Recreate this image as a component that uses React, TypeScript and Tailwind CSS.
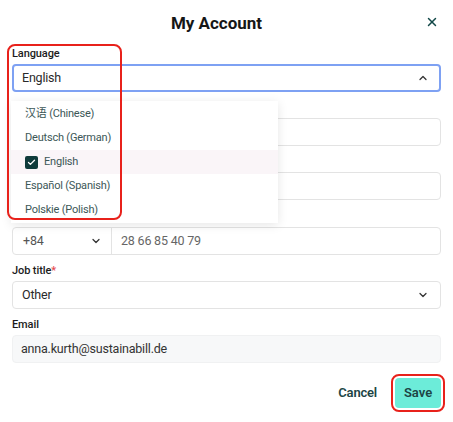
import { X, ChevronUp, ChevronDown, Check } from 'lucide-react';

const languages = [
  { label: '汉语 (Chinese)' },
  { label: 'Deutsch (German)' },
  { label: 'English', selected: true },
  { label: 'Español (Spanish)' },
  { label: 'Polskie (Polish)' },
];

function Label({ children, required }: { children?: React.ReactNode; required?: boolean }) {
  return (
    <div className="h-4 mb-[2px] text-[11px] leading-4 font-medium tracking-[-0.1px] text-[#1c1c1c]">
      {children}
      {required && <span className="text-[#e5484d]">*</span>}
    </div>
  );
}

export default function App() {
  return (
    <div
      className="w-[453px] h-[422px] bg-white px-3 relative"
      style={{ fontFamily: 'Roboto, "Noto Sans CJK SC", sans-serif' }}
    >
      <div className="h-[46px] flex items-center justify-center relative pt-[2px] pr-[20px]">
        <h1 className="text-[17px] font-bold text-[#161616]">My Account</h1>
        <button className="absolute right-[2px] top-[15px] text-[#124848]">
          <X className="h-[14px] w-[14px]" strokeWidth={2.5} />
        </button>
      </div>

      {/* Language */}
      <div className="relative">
        <Label>Language</Label>
        <div className="h-7 rounded border-2 border-[#7ea1f3] flex items-center justify-between pl-[8px] pr-[10px] text-[12.5px] tracking-[-0.2px] text-[#2a2a2a]">
          <span>English</span>
          <ChevronUp className="h-3 w-3 text-[#333]" strokeWidth={2.5} />
        </div>

        <div className="absolute left-[-1px] top-[55px] w-[267px] bg-white py-px shadow-[0_2px_10px_rgba(0,0,0,0.1)] z-10">
          {languages.map((l) => (
            <div
              key={l.label}
              className={`h-6 flex items-center pl-[14px] text-[11px] tracking-[-0.2px] text-[#3c5757] ${l.selected ? 'bg-[#faf5f8]' : ''}`}
            >
              {l.selected && (
                <span className="h-[13px] w-[13px] rounded-[2px] bg-[#0f3b3b] flex items-center justify-center mr-[6px]">
                  <Check className="h-[9px] w-[9px] text-white" strokeWidth={3.5} />
                </span>
              )}
              {l.label}
            </div>
          ))}
        </div>

        <div className="absolute left-[-5px] top-[-2px] w-[115px] h-[176px] rounded-lg border-2 border-[#e8211b] z-20 pointer-events-none" />
      </div>

      {/* Fields hidden behind the open dropdown */}
      <div className="mt-2">
        <Label />
        <div className="h-7 rounded border border-[#e3e3e3]" />
      </div>
      <div className="mt-2">
        <Label />
        <div className="h-7 rounded border border-[#e3e3e3]" />
      </div>

      {/* Phone */}
      <div className="mt-[9px]">
        <Label />
        <div className="h-7 rounded border border-[#e3e3e3] flex text-[12.5px] tracking-[-0.2px] text-[#555]">
          <div className="w-[99px] flex items-center justify-between pl-[10px] pr-[9px] border-r border-[#e3e3e3]">
            <span>+84</span>
            <ChevronDown className="h-3 w-3 text-[#333]" strokeWidth={2.5} />
          </div>
          <div className="flex items-center pl-[9px] text-[#666]">28 66 85 40 79</div>
        </div>
      </div>

      {/* Job title */}
      <div className="mt-2">
        <Label required>Job title</Label>
        <div className="h-7 rounded border border-[#e3e3e3] flex items-center justify-between pl-[9px] pr-[11px] text-[12.5px] tracking-[-0.2px] text-[#2a2a2a]">
          <span>Other</span>
          <ChevronDown className="h-3 w-3 text-[#333]" strokeWidth={2.5} />
        </div>
      </div>

      {/* Email */}
      <div className="mt-2">
        <Label>Email</Label>
        <div className="h-7 rounded bg-[#f7f8f9] border border-[#f0f1f2] flex items-center pl-[8px] text-[12.5px] tracking-[-0.2px] text-[#333]">
          anna.kurth@sustainabill.de
        </div>
      </div>

      <div className="mt-[15px] flex items-center justify-end gap-[18px]">
        <button className="text-[13px] font-semibold tracking-[-0.2px] text-[#1d4545]">Cancel</button>
        <div className="relative">
          <button className="h-[30px] w-[46px] rounded bg-[#6cecd9] text-[13px] font-semibold text-[#1d4545]">
            Save
          </button>
          <div className="absolute left-[-4px] top-[-4px] w-[54px] h-[38px] rounded-lg border-2 border-[#e8211b] pointer-events-none" />
        </div>
      </div>
    </div>
  );
}
